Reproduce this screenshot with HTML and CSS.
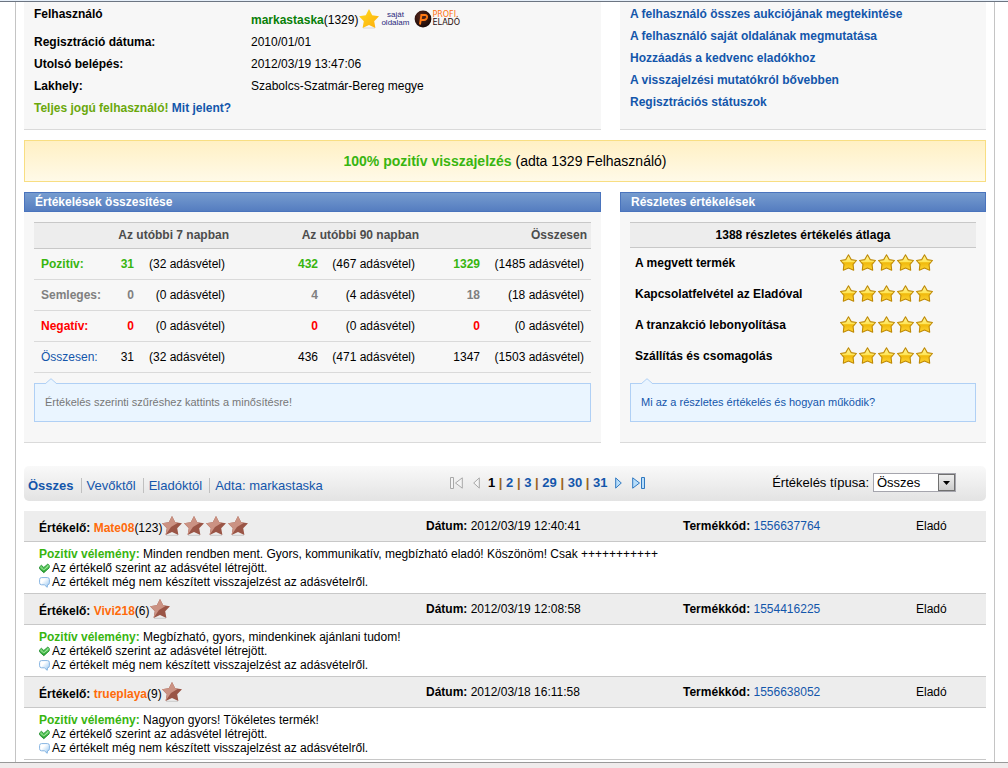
FILE: index.html
```html
<!DOCTYPE html>
<html lang="hu">
<head>
<meta charset="utf-8">
<title>markastaska – visszajelzések</title>
<link rel="stylesheet" href="styles.css">
</head>
<body>
<svg class="defs" aria-hidden="true">
  <defs>
    <linearGradient id="gold" x1="0" y1="0" x2="0" y2="1"><stop offset="0" stop-color="#fff6a0"/><stop offset=".45" stop-color="#ffe658"/><stop offset=".52" stop-color="#f0b90c"/><stop offset="1" stop-color="#ffd535"/></linearGradient>
    <linearGradient id="amber" x1="0" y1="0" x2="1" y2="1"><stop offset="0" stop-color="#ffdc1e"/><stop offset="1" stop-color="#fdac0c"/></linearGradient>
    <linearGradient id="leaf" x1="0" y1="0" x2="0" y2="1"><stop offset="0" stop-color="#7be07b"/><stop offset="1" stop-color="#25a02c"/></linearGradient>
    <linearGradient id="sky" x1="0" y1="0" x2="1" y2="1"><stop offset=".35" stop-color="#fff"/><stop offset="1" stop-color="#8fc2f0"/></linearGradient>
    <radialGradient id="coal" cx=".4" cy=".35" r=".7"><stop offset="0" stop-color="#5a2a1c"/><stop offset="1" stop-color="#140606"/></radialGradient>
  </defs>
  <symbol id="star-gold" viewBox="0 0 16 16"><path d="M8 .7 10.6 5.3 15.5 6.1 12.3 9.8 12.9 15.2 8 13.1 3.1 15.2 3.7 9.8.5 6.1 5.4 5.3Z" fill="url(#gold)" stroke="#bf8a06" stroke-width="1" stroke-linejoin="round"/></symbol>
  <symbol id="star-amber" viewBox="0 0 20 20"><path d="M4 19H16" stroke="#d8d8d8"/><path d="M10 0 13.2 6.2 20 7.2 15.2 12.2 16.4 19 10 16 3.6 19 4.8 12.2 0 7.2 6.8 6.2Z" fill="url(#amber)"/></symbol>
  <symbol id="star-bronze" viewBox="0 0 20 20"><path d="M4 19.3H16" stroke="#c9c9c9"/><path d="M10 0 13.2 6.2 20 7.2 15.2 12.2 16.4 19 10 16 3.6 19 4.8 12.2 0 7.2 6.8 6.2Z" fill="#9a5546"/><path d="M10 0 13.2 6.2 16 6.7 9 11 3.6 19 4.8 12.2 0 7.2 6.8 6.2Z" fill="#cb9283"/></symbol>
  <symbol id="check" viewBox="0 0 11 10"><path d="M.6 3.4 2.4 1.8 4.8 4 8.8.6 10.3 2 10.1 4.4 4.8 9.2.8 5.6Z" fill="url(#leaf)" stroke="#1c8a28" stroke-width=".9"/><path d="M1.4 3.6 4.8 6.4 9.6 2.3" fill="none" stroke="#b4f0ae" stroke-width=".8"/></symbol>
  <symbol id="bubble" viewBox="0 0 11 11"><path d="M2.5.6h6Q10.4.6 10.4 2.6v3.2Q10.4 7.8 8.5 7.8L8.2 10.3 5.4 7.8H2.5Q.6 7.8.6 5.8V2.6Q.6.6 2.5.6Z" fill="url(#sky)" stroke="#86b4e2"/></symbol>
</svg>

<main class="page">
  <div class="columns">
    <section class="panel profile">
      <dl>
        <dt>Felhasználó</dt>
        <dd class="user"><a class="user-name" href="#">markastaska</a>(1329)<svg class="star-big"><use href="#star-amber"/></svg>
          <a class="own-page" href="#">saját<br>oldalam</a>
          <span class="profi"><svg class="profi-logo" viewBox="0 0 18 18"><circle cx="9" cy="9" r="8.4" fill="url(#coal)"/><path d="M6 14.5 7.4 5H11Q13.4 5 13 7.4 12.5 10 10 10H7.2" fill="none" stroke="#ff7a14" stroke-width="1.9"/></svg><span class="profi-text"><b>PROFI.</b><br>ELADÓ</span></span>
        </dd>
        <dt>Regisztráció dátuma:</dt><dd>2010/01/01</dd>
        <dt>Utolsó belépés:</dt><dd>2012/03/19 13:47:06</dd>
        <dt>Lakhely:</dt><dd>Szabolcs-Szatmár-Bereg megye</dd>
      </dl>
      <p class="status">Teljes jogú felhasználó! <a href="#">Mit jelent?</a></p>
    </section>
    <nav class="panel links">
      <a href="#">A felhasználó összes aukciójának megtekintése</a>
      <a href="#">A felhasználó saját oldalának megmutatása</a>
      <a href="#">Hozzáadás a kedvenc eladókhoz</a>
      <a href="#">A visszajelzési mutatókról bővebben</a>
      <a href="#">Regisztrációs státuszok</a>
    </nav>
  </div>

  <p class="score"><b>100% pozitív visszajelzés</b> (adta 1329 Felhasználó)</p>

  <div class="columns">
    <section class="panel ratings">
      <h2>Értékelések összesítése</h2>
      <div class="panel-body">
        <table class="summary">
          <colgroup><col class="c-label"><col class="c-n7"><col class="c-t7"><col class="c-n90"><col class="c-t90"><col class="c-nall"><col class="c-tall"></colgroup>
          <thead><tr><td></td><th colspan="2">Az utóbbi 7 napban</th><th colspan="2">Az utóbbi 90 napban</th><th colspan="2">Összesen</th></tr></thead>
          <tbody>
            <tr class="positive"><th><a href="#">Pozitív:</a></th><td>31</td><td>(32 adásvétel)</td><td>432</td><td>(467 adásvétel)</td><td>1329</td><td>(1485 adásvétel)</td></tr>
            <tr class="neutral"><th><a href="#">Semleges:</a></th><td>0</td><td>(0 adásvétel)</td><td>4</td><td>(4 adásvétel)</td><td>18</td><td>(18 adásvétel)</td></tr>
            <tr class="negative"><th><a href="#">Negatív:</a></th><td>0</td><td>(0 adásvétel)</td><td>0</td><td>(0 adásvétel)</td><td>0</td><td>(0 adásvétel)</td></tr>
            <tr class="total"><th><a href="#">Összesen:</a></th><td>31</td><td>(32 adásvétel)</td><td>436</td><td>(471 adásvétel)</td><td>1347</td><td>(1503 adásvétel)</td></tr>
          </tbody>
        </table>
        <p class="tip"><svg class="tip-arrow" viewBox="0 0 12 6"><path d="M0 6 6 .5 12 6Z" fill="#eaf5ff"/><path d="M0 6 6 .7 12 6" fill="none" stroke="#b0d0f5"/></svg>Értékelés szerinti szűréshez kattints a minősítésre!</p>
      </div>
    </section>
    <section class="panel ratings">
      <h2>Részletes értékelések</h2>
      <div class="panel-body">
        <table class="details">
          <colgroup><col class="c-topic"><col></colgroup>
          <thead><tr><th colspan="2">1388 részletes értékelés átlaga</th></tr></thead>
          <tbody>
            <tr><th>A megvett termék</th><td><div class="stars"><svg><use href="#star-gold"/></svg><svg><use href="#star-gold"/></svg><svg><use href="#star-gold"/></svg><svg><use href="#star-gold"/></svg><svg><use href="#star-gold"/></svg></div></td></tr>
            <tr><th>Kapcsolatfelvétel az Eladóval</th><td><div class="stars"><svg><use href="#star-gold"/></svg><svg><use href="#star-gold"/></svg><svg><use href="#star-gold"/></svg><svg><use href="#star-gold"/></svg><svg><use href="#star-gold"/></svg></div></td></tr>
            <tr><th>A tranzakció lebonyolítása</th><td><div class="stars"><svg><use href="#star-gold"/></svg><svg><use href="#star-gold"/></svg><svg><use href="#star-gold"/></svg><svg><use href="#star-gold"/></svg><svg><use href="#star-gold"/></svg></div></td></tr>
            <tr><th>Szállítás és csomagolás</th><td><div class="stars"><svg><use href="#star-gold"/></svg><svg><use href="#star-gold"/></svg><svg><use href="#star-gold"/></svg><svg><use href="#star-gold"/></svg><svg><use href="#star-gold"/></svg></div></td></tr>
          </tbody>
        </table>
        <p class="tip"><svg class="tip-arrow" viewBox="0 0 12 6"><path d="M0 6 6 .5 12 6Z" fill="#eaf5ff"/><path d="M0 6 6 .7 12 6" fill="none" stroke="#b0d0f5"/></svg><a href="#">Mi az a részletes értékelés és hogyan működik?</a></p>
      </div>
    </section>
  </div>

  <div class="toolbar">
    <nav class="tabs">
      <a class="current" href="#">Összes</a><a href="#">Vevőktől</a><a href="#">Eladóktól</a><a href="#">Adta: markastaska</a>
    </nav>
    <nav class="pager">
      <svg class="first" viewBox="0 0 13 12" fill="#f4f4f4" stroke="#a8a8a8"><path d="M.5.5h3v11h-3zM12.3.8v10.4L5.5 6Z"/></svg>
      <svg class="step" viewBox="0 0 7 12" fill="#f4f4f4" stroke="#a8a8a8"><path d="M6.3.9v10.2L.7 6Z"/></svg>
      <span class="numbers"><b>1</b> | <a href="#">2</a> | <a href="#">3</a> | <a href="#">29</a> | <a href="#">30</a> | <a href="#">31</a></span>
      <a href="#" aria-label="Következő"><svg class="step" viewBox="0 0 7 12" fill="#b9defa" stroke="#2f78c0"><path d="M.7.9v10.2L6.3 6Z"/></svg></a>
      <a href="#" aria-label="Utolsó"><svg class="first" viewBox="0 0 13 12" fill="#b9defa" stroke="#2f78c0"><path d="M9.5.5h3v11h-3zM.7.8v10.4L7.5 6Z"/></svg></a>
    </nav>
    <div class="filter">
      <label for="type">Értékelés típusa:</label>
      <span class="select"><select id="type"><option>Összes</option><option>Pozitív</option><option>Semleges</option><option>Negatív</option></select><span class="select-button"><svg viewBox="0 0 7 4"><path d="M0 0h7L3.5 4Z"/></svg></span></span>
    </div>
  </div>

  <div class="reviews">
    <article>
      <header>
        <div class="rater"><b>Értékelő: <a href="#">Mate08</a></b>(123)<span class="bronze"><svg><use href="#star-bronze"/></svg><svg><use href="#star-bronze"/></svg><svg><use href="#star-bronze"/></svg><svg><use href="#star-bronze"/></svg></span></div>
        <div><b>Dátum:</b> 2012/03/19 12:40:41</div>
        <div><b>Termékkód:</b> <a href="#">1556637764</a></div>
        <div>Eladó</div>
      </header>
      <div class="opinion">
        <p><b>Pozitív vélemény:</b> Minden rendben ment. Gyors, kommunikatív, megbízható eladó! Köszönöm! Csak +++++++++++</p>
        <p class="note"><svg><use href="#check"/></svg>Az értékelő szerint az adásvétel létrejött.</p>
        <p class="note"><svg><use href="#bubble"/></svg>Az értékelt még nem készített visszajelzést az adásvételről.</p>
      </div>
    </article>
    <article>
      <header>
        <div class="rater"><b>Értékelő: <a href="#">Vivi218</a></b>(6)<span class="bronze"><svg><use href="#star-bronze"/></svg></span></div>
        <div><b>Dátum:</b> 2012/03/19 12:08:58</div>
        <div><b>Termékkód:</b> <a href="#">1554416225</a></div>
        <div>Eladó</div>
      </header>
      <div class="opinion">
        <p><b>Pozitív vélemény:</b> Megbízható, gyors, mindenkinek ajánlani tudom!</p>
        <p class="note"><svg><use href="#check"/></svg>Az értékelő szerint az adásvétel létrejött.</p>
        <p class="note"><svg><use href="#bubble"/></svg>Az értékelt még nem készített visszajelzést az adásvételről.</p>
      </div>
    </article>
    <article>
      <header>
        <div class="rater"><b>Értékelő: <a href="#">trueplaya</a></b>(9)<span class="bronze"><svg><use href="#star-bronze"/></svg></span></div>
        <div><b>Dátum:</b> 2012/03/18 16:11:58</div>
        <div><b>Termékkód:</b> <a href="#">1556638052</a></div>
        <div>Eladó</div>
      </header>
      <div class="opinion">
        <p><b>Pozitív vélemény:</b> Nagyon gyors! Tökéletes termék!</p>
        <p class="note"><svg><use href="#check"/></svg>Az értékelő szerint az adásvétel létrejött.</p>
        <p class="note"><svg><use href="#bubble"/></svg>Az értékelt még nem készített visszajelzést az adásvételről.</p>
      </div>
    </article>
  </div>
</main>
<div class="window-edge"></div>
</body>
</html>
```
FILE: styles.css
```css
* { box-sizing: border-box; }
body {
  margin: 0;
  min-height: 100vh;
  display: flex;
  flex-direction: column;
  border-top: 1px solid #e6eff9;
  background: #fff;
  color: #000;
  font: 12px/14px "Liberation Sans", Arial, sans-serif;
}
body::before { content: ""; height: 1px; background: #6c7582; }
a { color: #1356ab; text-decoration: none; }
p, dl, dd, h2 { margin: 0; }
svg { display: block; flex: none; }
.defs { position: absolute; width: 0; height: 0; }

.page {
  flex: 1;
  margin: 0 13px 0 15px;
  padding: 0 8px;
  border: solid #c4c4c4;
  border-width: 0 1px;
}
.columns { display: grid; grid-template-columns: 577fr 366fr; gap: 19px; }
.panel { background: #f7f7f7; border-bottom: 1px solid #dadada; }

.profile { padding: 1px 10px 10px; line-height: 22px; }
.profile dl { display: grid; grid-template-columns: 217px 1fr; }
.profile dt { font-weight: bold; }
.user { display: flex; align-items: center; height: 28px; padding-top: 6px; }
.user-name { color: #087f08; font-weight: bold; }
.star-big { width: 20px; height: 20px; margin: 0 2px 2px 1px; }
.own-page {
  margin-bottom: 3px;
  color: #2a2a7c;
  font: 8px/8px "Liberation Sans", sans-serif;
  text-align: center;
}
.profi { display: flex; align-items: center; margin: 0 0 2px 5px; }
.profi-logo { width: 18px; height: 18px; }
.profi-text { color: #2a0f0f; font: 8px/8px "DejaVu Sans", sans-serif; }
.profi-text b { color: #ff7010; font-weight: normal; }
.status { color: #6aa80c; font-weight: bold; }

.links { display: flex; flex-direction: column; align-items: flex-start; padding: 1px 10px 16px; font-weight: bold; line-height: 22px; }

.score {
  margin: 10px 0;
  padding: 10px;
  border: 1px solid #f8de82;
  background: linear-gradient(#fff0c4, #fffae8);
  font-size: 14px;
  line-height: 20px;
  text-align: center;
}
.score b { color: #38b510; }

.ratings h2 {
  padding: 0 10px;
  border: 1px solid #4a74bd;
  background: linear-gradient(#769ccf, #557dc0);
  color: #fff;
  font-size: 12px;
  line-height: 18px;
}
.panel-body { padding: 10px 10px 20px; }
table { width: 100%; border-collapse: separate; border-spacing: 0; table-layout: fixed; }
td, th { padding: 0; }
.summary { text-align: right; }
.summary thead td, .summary thead th {
  height: 27px;
  padding: 0 4px 2px 0;
  border: solid #c8c8c8;
  border-width: 1px 0;
  background: #ededed;
  color: #4c4c4c;
  text-align: right;
}
.summary tbody td, .summary tbody th { height: 31px; padding-right: 8px; border-bottom: 1px solid #dadada; }
.summary tbody th { padding: 0 0 0 7px; text-align: left; }
.summary tbody td:nth-child(even) { font-weight: bold; }
.summary tbody td:last-child { padding-right: 7px; }
.summary .total th, .summary .total td:nth-child(even) { font-weight: normal; }
.positive a, .positive td:nth-child(even) { color: #38b510; }
.neutral a, .neutral td:nth-child(even) { color: #808080; }
.negative a, .negative td:nth-child(even) { color: #f00; }
.c-label { width: 74px; }
.c-n7 { width: 34px; }
.c-t7 { width: 91px; }
.c-n90 { width: 93px; }
.c-t90 { width: 97px; }
.c-nall { width: 65px; }

.c-topic { width: 60%; }
.details thead th { height: 26px; border: solid #c8c8c8; border-width: 1px 0; background: #ededed; }
.details tbody th, .details tbody td { height: 31px; padding: 0 0 2px 5px; text-align: left; }
.details tbody td { padding-left: 2px; }
.stars { display: flex; gap: 2px; }
.stars svg { width: 17px; height: 17px; }

.tip {
  position: relative;
  margin-top: 10px;
  padding: 11px 10px 12px;
  border: 1px solid #b0d0f5;
  background: #eaf5ff;
  color: #777;
  font-size: 11px;
}
.details + .tip { margin-top: 11px; }
.tip-arrow { position: absolute; left: 10px; top: -6px; width: 12px; height: 6px; }

.toolbar {
  display: grid;
  grid-template-columns: 426fr 300fr 236fr;
  align-items: center;
  height: 35px;
  margin: 23px 0 10px;
  border-radius: 5px;
  background: linear-gradient(#f9f9f9, #e3e3e3);
  font-size: 13px;
  line-height: 15px;
}
.tabs { display: flex; padding: 4px 0 0 4px; }
.tabs a { padding: 0 7px 0 5px; border-left: 1px solid #c0c0c0; }
.tabs .current { padding-left: 0; border: 0; font-weight: bold; }
.pager { display: flex; align-items: center; margin-bottom: 2px; }
.pager .first { width: 13px; height: 12px; }
.pager .step { width: 7px; height: 12px; }
.numbers { margin: 0 8px; color: #9a6420; font-weight: bold; }
.numbers b { color: #000; }
.pager > svg + svg, .pager > a + a { margin-left: 10px; }
.filter { display: flex; justify-content: flex-end; align-items: center; gap: 4px; padding: 0 30px 2px 0; }
.select { position: relative; }
.select select {
  display: block;
  appearance: none;
  width: 83px;
  height: 19px;
  padding: 0 20px 0 3px;
  border: 1px solid #a5a5ad;
  border-radius: 0;
  background: #fff;
  color: #000;
  font: inherit;
}
.select-button {
  position: absolute;
  top: 1px;
  right: 1px;
  bottom: 1px;
  width: 17px;
  display: grid;
  place-items: center;
  border: 1px solid #707070;
  background: linear-gradient(#eee, #ccc);
  pointer-events: none;
}
.select-button svg { width: 7px; height: 4px; }

.reviews { border-bottom: 1px solid #c8c8c8; }
.reviews header {
  display: grid;
  grid-template-columns: 387fr 257fr 233fr 70fr;
  align-items: center;
  height: 32px;
  padding: 0 0 1px 15px;
  border: solid #c8c8c8;
  border-width: 1px 0;
  background: #ededed;
}
.reviews article:first-child header { height: 31px; border-top: 0; }
.rater { display: flex; align-items: center; padding-top: 4px; white-space: pre; }
.rater b a { color: #ff6a0a; }
.bronze { display: flex; gap: 2px; margin-bottom: 3px; }
.bronze svg { width: 20px; height: 20px; }
.opinion { padding: 5px 15px 4px; }
.opinion b { color: #38b510; }
.note { display: flex; align-items: center; gap: 2px; }
.note svg { width: 11px; height: 11px; }

.window-edge { height: 6px; border-top: 1px solid #999; background: #f0ecec; }
```
